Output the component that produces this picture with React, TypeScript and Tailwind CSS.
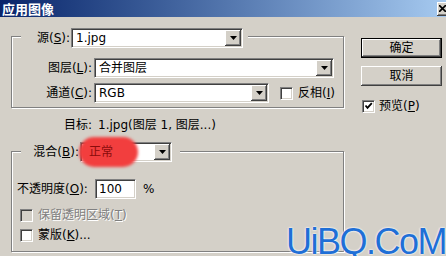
import { ReactNode } from 'react';

const sunken =
  'border border-t-[#808080] border-l-[#808080] border-b-white border-r-white shadow-[inset_1px_1px_0_#404040,inset_-1px_-1px_0_#d4d0c8]';
const raised =
  'bg-[#d4d0c8] shadow-[inset_-1px_-1px_0_#404040,inset_1px_1px_0_#fff,inset_-2px_-2px_0_#808080,inset_2px_2px_0_#d4d0c8]';
const etched = 'border border-[#808080] shadow-[1px_1px_0_#fff,inset_1px_1px_0_#fff]';

function Arrow() {
  return (
    <div className={`${raised} w-[16px] h-[16px] mr-[1px] shrink-0 flex items-center justify-center`}>
      <svg width="7" height="4" viewBox="0 0 7 4">
        <path d="M0 0h7L3.5 4z" fill="#000" />
      </svg>
    </div>
  );
}

function Combo({ width, children }: { width: string; children: ReactNode }) {
  return (
    <div className={`${sunken} ${width} bg-white h-[20px] flex items-center`}>
      <span className="flex-1 pl-[4px] leading-none whitespace-nowrap">{children}</span>
      <Arrow />
    </div>
  );
}

function Check({ checked = false, disabled = false }: { checked?: boolean; disabled?: boolean }) {
  return (
    <div
      className={`${sunken} w-[13px] h-[13px] shrink-0 flex items-center justify-center ${disabled ? 'bg-[#d4d0c8]' : 'bg-white'}`}
    >
      {checked && (
        <svg width="9" height="8" viewBox="0 0 9 8">
          <polyline points="1.5,3.5 3.5,5.8 7.8,1.2" fill="none" stroke="#000" strokeWidth="1.8" />
        </svg>
      )}
    </div>
  );
}

export default function App() {
  return (
    <div className="w-[446px] h-[256px] bg-[#d4d0c8] relative overflow-hidden flex flex-col text-[12px] text-black font-['DejaVu_Sans','Noto_Sans_CJK_SC',sans-serif]">
      {/* Title bar */}
      <div className="h-[17px] shrink-0 flex items-center justify-between bg-gradient-to-r from-[#0a246a] to-[#a6caf0]">
        <span className="pl-[2px] text-white font-bold text-[13px] leading-none font-['Noto_Sans_CJK_SC',sans-serif]">
          应用图像
        </span>
        <div className={`${raised} w-[16px] h-[14px] -mr-[7px] flex items-center pl-[2px]`}>
          <svg width="8" height="7" viewBox="0 0 8 7">
            <path d="M0 0L7 7M7 0L0 7" stroke="#000" strokeWidth="1.6" />
          </svg>
        </div>
      </div>

      <div className="flex pl-[11px] pt-[19px]">
        {/* Left column */}
        <div className="w-[333px] flex flex-col">
          <div className={`${etched} flex flex-col pb-[4px]`}>
            <div className="-mt-[9px] ml-[9px] pl-[12px] pr-[5px] w-fit bg-[#d4d0c8] flex items-center">
              <span className="w-[38px] pr-[1px] text-right">
                源(<u>S</u>):
              </span>
              <Combo width="w-[172px]">1.jpg</Combo>
            </div>
            <div className="mt-[10px] flex items-center">
              <span className="w-[82px] pr-[2px] text-right">
                图层(<u>L</u>):
              </span>
              <Combo width="w-[240px]">合并图层</Combo>
            </div>
            <div className="mt-[5px] flex items-center">
              <span className="w-[82px] pr-[2px] text-right">
                通道(<u>C</u>):
              </span>
              <Combo width="w-[175px]">RGB</Combo>
              <div className="ml-[11px]">
                <Check />
              </div>
              <span className="ml-[5px]">
                反相(<u>I</u>)
              </span>
            </div>
          </div>

          <div className="mt-[9px] h-[16px] flex items-center">
            <span className="w-[81px] text-right">目标:</span>
            <span className="ml-[6px]">1.jpg(图层 1, 图层...)</span>
          </div>

          <div className={`${etched} mt-[18px] flex flex-col pb-[8px]`}>
            <div className="-mt-[10px] ml-[9px] pl-[12px] pr-[8px] w-fit bg-[#d4d0c8] flex items-center">
              <span className="w-[47px] pr-[1px] text-right">
                混合(<u>B</u>):
              </span>
              <div className="relative">
                <Combo width="w-[92px]">
                  <span className="pl-[4px]">&nbsp;</span>
                </Combo>
                <div className="absolute left-[-1px] top-[-5px] w-[59px] h-[30px] rounded-full bg-[#f23e3e] blur-[1.5px]" />
                <span className="absolute left-[9px] top-[3px] text-[#8a0c0c] leading-[14px]">正常</span>
              </div>
            </div>
            <div className="mt-[17px] pl-[5px] flex items-center">
              <span className="w-[78px]">
                不透明度(<u>O</u>):
              </span>
              <div className={`${sunken} w-[41px] h-[20px] bg-white flex items-center pl-[3px]`}>100</div>
              <span className="ml-[7px]">%</span>
            </div>
            <div className="mt-[8px] h-[16px] pl-[8px] flex items-center">
              <Check disabled />
              <span className="ml-[5px] text-[#808080] [text-shadow:1px_1px_0_#fff]">
                保留透明区域(<u>T</u>)
              </span>
            </div>
            <div className="mt-[4px] h-[16px] pl-[8px] flex items-center">
              <Check />
              <span className="ml-[5px]">
                蒙版(<u>K</u>)...
              </span>
            </div>
          </div>
        </div>

        {/* Right column */}
        <div className="ml-[17px] w-[81px] pt-[2px] flex flex-col">
          <button className={`${raised} h-[20px] w-full border border-black flex items-center justify-center`}>
            确定
          </button>
          <button className={`${raised} mt-[8px] h-[20px] w-full flex items-center justify-center`}>取消</button>
          <div className="mt-[12px] h-[16px] pl-[1px] flex items-center">
            <Check checked />
            <span className="ml-[4px]">
              预览(<u>P</u>)
            </span>
          </div>
        </div>
      </div>

      {/* Watermark */}
      <div className="absolute right-0 bottom-0 h-[28px] text-[36px] leading-[28px] tracking-[-1.5px] text-[#1f6fd6] font-['Liberation_Sans',sans-serif] [text-shadow:0_0_2px_#fff,0_0_2px_#fff]">
        UiBQ.CoM
      </div>
    </div>
  );
}
